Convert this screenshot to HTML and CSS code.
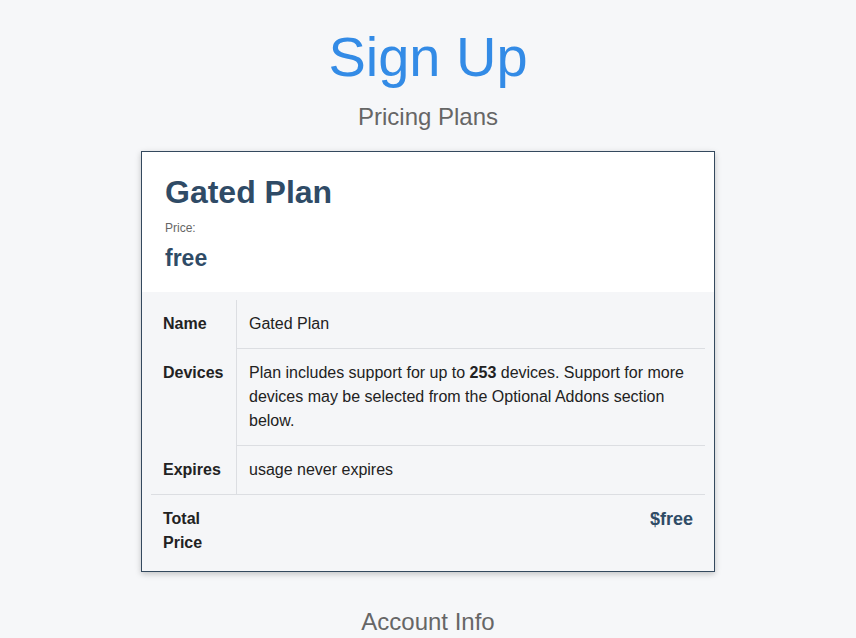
FILE: index.html
```html
<!DOCTYPE html>
<html>
<head>
<meta charset="utf-8">
<link rel="stylesheet" href="styles.css">
</head>
<body>
<main class="page">
  <h1 class="title">Sign Up</h1>
  <h2 class="subtitle">Pricing Plans</h2>
  <section class="card">
    <div class="card-head">
      <h3 class="plan-name">Gated Plan</h3>
      <div class="price-label">Price:</div>
      <div class="price-value">free</div>
    </div>
    <div class="card-body">
      <table class="details">
        <tr>
          <th>Name</th>
          <td>Gated Plan</td>
        </tr>
        <tr>
          <th>Devices</th>
          <td class="bordered">Plan includes support for up to <b>253</b> devices. Support for more devices may be selected from the Optional Addons section below.</td>
        </tr>
        <tr>
          <th>Expires</th>
          <td class="bordered">usage never expires</td>
        </tr>
        <tr class="total">
          <th>Total Price</th>
          <td class="total-value">$free</td>
        </tr>
      </table>
    </div>
  </section>
  <h2 class="subtitle section">Account Info</h2>
</main>
</body>
</html>
```
FILE: styles.css
```css
html, body {
  margin: 0;
  padding: 0;
  background: #f6f7f9;
  font-family: "Liberation Sans", Arial, sans-serif;
}
.page {
  display: flex;
  flex-direction: column;
  align-items: center;
  padding-top: 25px;
}
.title {
  margin: 0;
  font-size: 56px;
  line-height: 64px;
  font-weight: 400;
  color: #338be6;
}
.subtitle {
  margin: 14px 0 0;
  font-size: 24px;
  line-height: 28px;
  font-weight: 400;
  color: #666;
}
.subtitle.section {
  margin-top: 36px;
}
.card {
  margin-top: 20px;
  width: 572px;
  border: 1px solid #34495e;
  background: #f5f6f8;
  box-shadow: 0 2px 6px rgba(0, 0, 0, 0.22);
}
.card-head {
  background: #fff;
  padding: 22px 24px 20px 23px;
}
.plan-name {
  margin: 0;
  font-size: 32px;
  line-height: 37px;
  font-weight: 700;
  color: #2f4b66;
}
.price-label {
  margin-top: 10px;
  font-size: 12px;
  line-height: 15px;
  color: #666;
}
.price-value {
  margin-top: 9px;
  font-size: 23px;
  line-height: 27px;
  font-weight: 700;
  color: #2f4b66;
}
.card-body {
  padding: 8px 9px 4px 9px;
}
.details {
  width: 100%;
  border-collapse: collapse;
  font-size: 16px;
  line-height: 24px;
  color: #222;
}
.details th {
  width: 61px;
  padding: 12px 12px;
  text-align: left;
  vertical-align: top;
  font-weight: 700;
}
.details td {
  padding: 12px 12px;
  vertical-align: top;
  border-left: 1px solid #dcdee2;
}
.details td.bordered {
  border-top: 1px solid #dcdee2;
}
.details tr.total th,
.details tr.total td {
  border-top: 1px solid #dcdee2;
}
.details td.total-value {
  border-left: none;
  text-align: right;
  font-size: 18px;
  font-weight: 700;
  color: #2f4b66;
}
```
